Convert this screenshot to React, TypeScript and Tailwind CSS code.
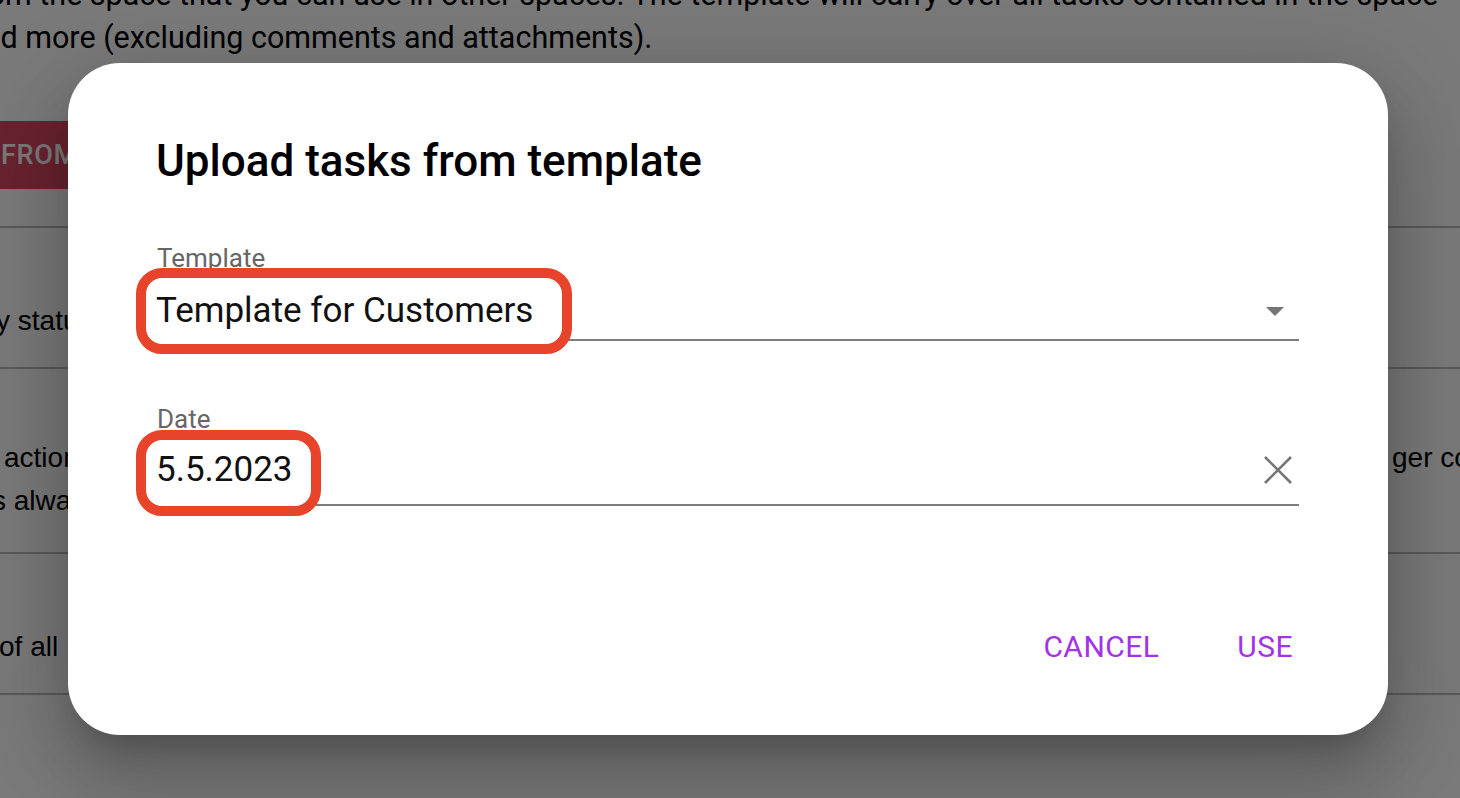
import React from "react";

// Background page (dimmed by the dialog overlay)
function BackgroundPage() {
  return (
    <div className="flex flex-col text-black">
      <div className="mt-[-27px] -ml-[33px] font-['Roboto',sans-serif] text-[30.5px] leading-[43px] whitespace-nowrap">
        <p>from the space that you can use in other spaces. The template will carry over all tasks contained in the space</p>
        <p>and more (excluding comments and attachments).</p>
      </div>

      <div className="mt-[62px] -ml-[20px] flex h-[68px] w-[420px] items-center rounded-[8px] bg-[#dc4a64] pl-[21px] font-['Roboto',sans-serif] text-[27px] font-medium uppercase tracking-wide text-white">
        From template
      </div>

      <div className="mt-[37px] flex flex-col font-['Liberation_Sans',Arial,sans-serif] text-[28px] leading-[32px]">
        <div className="h-[141px] border-t-2 border-[#bdbdbd] pt-[77px] -ml-[4px] whitespace-nowrap">
          y status of the tasks in the space
        </div>
        <div className="h-[185px] border-t-2 border-[#bdbdbd] pt-[73px] whitespace-nowrap">
          <div className="grid grid-cols-[1392px_1fr]">
            <span className="ml-[4px]">action runs automatically when the</span>
            <span>ger conditions are met</span>
          </div>
          <div className="mt-[11px] -ml-[8px]">s always applied to the tasks</div>
        </div>
        <div className="h-[141px] border-t-2 border-[#bdbdbd] pt-[77px] -ml-[1px] whitespace-nowrap">
          {"of all\u00a0\u00a0\u00a0the tasks"}
        </div>
        <div className="border-t-2 border-[#bdbdbd]" />
      </div>
    </div>
  );
}

function CaretDown() {
  return (
    <svg width="18" height="9" viewBox="0 0 18 9" className="block">
      <path d="M0 0 L18 0 L9 9 Z" fill="#757575" />
    </svg>
  );
}

function ClearIcon() {
  return (
    <svg width="30" height="30" viewBox="0 0 30 30" className="block">
      <path d="M2 2 L28 28 M28 2 L2 28" stroke="#757575" strokeWidth="2.6" fill="none" />
    </svg>
  );
}

export default function App() {
  return (
    <div className="relative h-screen w-full overflow-hidden bg-white">
      <BackgroundPage />

      {/* Overlay */}
      <div className="absolute inset-0 bg-black/[0.52]" />

      {/* Dialog */}
      <div className="absolute left-[68px] top-[63px] flex h-[672px] w-[1320px] flex-col rounded-[52px] bg-white px-[89px] pt-[70px] font-['Roboto',sans-serif] shadow-[0_22px_30px_-14px_rgba(0,0,0,0.2),0_48px_76px_6px_rgba(0,0,0,0.14),0_18px_92px_16px_rgba(0,0,0,0.12)]">
        <h2 className="-ml-[1px] text-[44px] font-medium leading-[56px] text-black">Upload tasks from template</h2>

        {/* Template field */}
        <div className="relative mt-[54px]">
          <label className="block text-[26px] leading-[30px] text-[#666]">Template</label>
          <div className="mt-[16px] flex items-center justify-between border-b-2 border-[#7d7d7d] pb-[6px]">
            <span className="relative z-10 -ml-[1px] text-[35px] leading-[44px] text-[#111]">Template for Customers</span>
            <span className="mr-[15px]">
              <CaretDown />
            </span>
          </div>
          <div className="absolute left-[-21px] top-[25px] h-[86px] w-[436px] rounded-[26px] border-[10px] border-[#e8442b] bg-white" />
        </div>

        {/* Date field */}
        <div className="relative mt-[63px]">
          <label className="block text-[26px] leading-[30px] text-[#666]">Date</label>
          <div className="mt-[14px] flex items-center justify-between border-b-2 border-[#7d7d7d] pb-[12px]">
            <span className="relative z-10 -ml-[1px] text-[35px] leading-[44px] text-[#111]">5.5.2023</span>
            <span className="mr-[6px]">
              <ClearIcon />
            </span>
          </div>
          <div className="absolute left-[-21px] top-[26px] h-[86px] w-[185px] rounded-[26px] border-[10px] border-[#e8442b] bg-white" />
        </div>

        {/* Actions */}
        <div className="mt-[123px] -mr-[2px] flex justify-end gap-[62px]">
          <button className="px-[8px] text-[30px] leading-[36px] font-normal uppercase tracking-[0.015em] text-[#a233e8]">
            Cancel
          </button>
          <button className="px-[8px] text-[30px] leading-[36px] font-normal uppercase tracking-[0.015em] text-[#a233e8]">
            Use
          </button>
        </div>
      </div>
    </div>
  );
}
